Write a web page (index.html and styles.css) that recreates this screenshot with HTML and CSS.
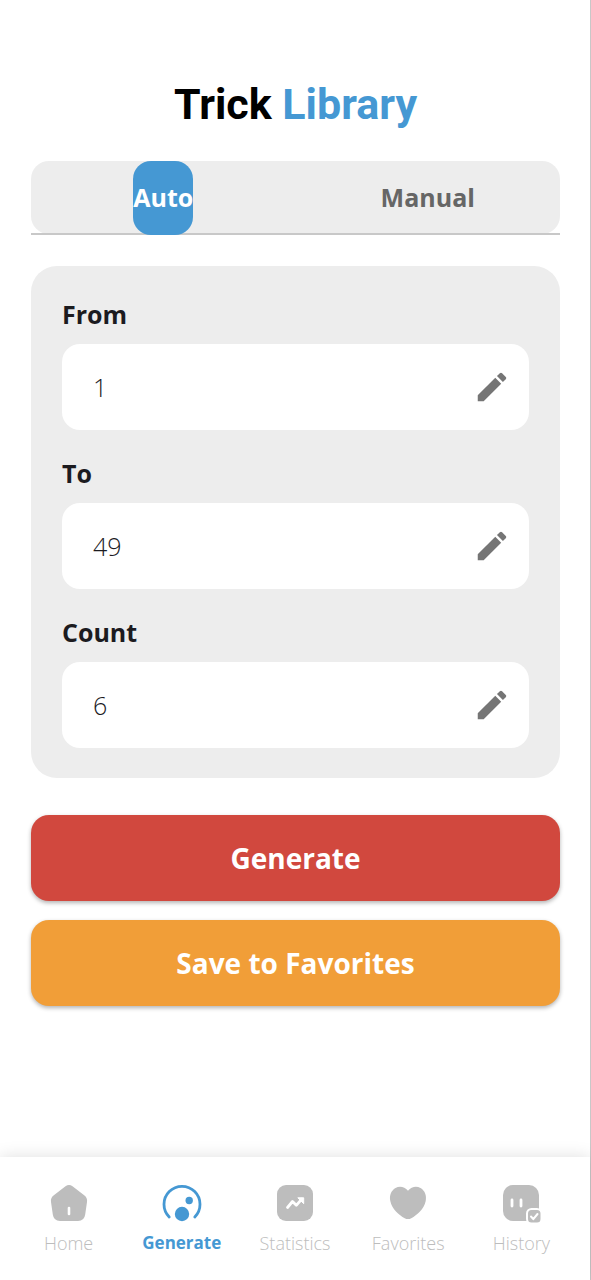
FILE: index.html
```html
<!DOCTYPE html>
<html lang="en">
<head>
<meta charset="utf-8">
<meta name="viewport" content="width=device-width, initial-scale=1">
<title>Trick Library</title>
<link rel="stylesheet" href="styles.css">
</head>
<body>
<div class="app">
  <main class="content">
    <h1 class="title">Trick <span class="title-accent">Library</span></h1>

    <div class="tabs" role="tablist">
      <div class="tab-cell"><button class="tab tab-active" type="button" role="tab" aria-selected="true">Auto</button></div>
      <div class="tab-cell"><button class="tab" type="button" role="tab" aria-selected="false">Manual</button></div>
    </div>

    <form class="form" id="range-form">
      <label class="label" for="from">From</label>
      <div class="field">
        <input class="input" id="from" type="text" inputmode="numeric" value="1">
        <svg class="pencil" viewBox="0 0 24 24" aria-hidden="true"><path d="M3 17.25V21h3.75L17.81 9.94l-3.75-3.75L3 17.25zM20.71 7.04a1 1 0 0 0 0-1.41l-2.34-2.34a1 1 0 0 0-1.41 0l-1.83 1.83 3.75 3.75 1.83-1.83z"/></svg>
      </div>
      <label class="label" for="to">To</label>
      <div class="field">
        <input class="input" id="to" type="text" inputmode="numeric" value="49">
        <svg class="pencil" viewBox="0 0 24 24" aria-hidden="true"><path d="M3 17.25V21h3.75L17.81 9.94l-3.75-3.75L3 17.25zM20.71 7.04a1 1 0 0 0 0-1.41l-2.34-2.34a1 1 0 0 0-1.41 0l-1.83 1.83 3.75 3.75 1.83-1.83z"/></svg>
      </div>
      <label class="label" for="count">Count</label>
      <div class="field">
        <input class="input" id="count" type="text" inputmode="numeric" value="6">
        <svg class="pencil" viewBox="0 0 24 24" aria-hidden="true"><path d="M3 17.25V21h3.75L17.81 9.94l-3.75-3.75L3 17.25zM20.71 7.04a1 1 0 0 0 0-1.41l-2.34-2.34a1 1 0 0 0-1.41 0l-1.83 1.83 3.75 3.75 1.83-1.83z"/></svg>
      </div>
    </form>

    <div class="actions">
      <button class="action action-generate" type="submit" form="range-form">Generate</button>
      <button class="action action-save" type="button">Save to Favorites</button>
    </div>
  </main>

  <nav class="nav">
    <a class="nav-item" href="#home">
      <svg class="nav-icon" viewBox="0 0 40 40" aria-hidden="true">
        <path fill="currentColor" d="M16.500 3.300Q20 .8 23.500 3.300L35.500 12.500Q38.600 15 38 19L36.200 31.500Q35.300 38 29 38H11Q4.700 38 3.800 31.500L2 19Q1.400 15 4.500 12.500Z"/>
        <path stroke="#fff" stroke-width="2.600" stroke-linecap="round" d="M20 25v6"/>
      </svg>
      <span>Home</span>
    </a>
    <a class="nav-item nav-item-active" href="#generate" aria-current="page">
      <svg class="nav-icon" viewBox="0 0 40 40" aria-hidden="true">
        <path fill="none" stroke="currentColor" stroke-width="2.800" stroke-linecap="round" d="M7.200 34A18 18 0 1 1 32.800 34"/>
        <circle cx="27.200" cy="17.500" r="3.700" fill="currentColor"/>
        <circle cx="20" cy="31" r="7.200" fill="currentColor"/>
      </svg>
      <span>Generate</span>
    </a>
    <a class="nav-item" href="#statistics">
      <svg class="nav-icon" viewBox="0 0 40 40" aria-hidden="true">
        <rect x="2" y="2" width="36" height="36" rx="9" fill="currentColor"/>
        <path fill="none" stroke="#fff" stroke-width="2.800" stroke-linecap="round" stroke-linejoin="round" d="M12.500 24.500l5-6 3.800 3.800 5.200-6"/>
        <path fill="#fff" stroke="#fff" stroke-linejoin="round" d="M22.800 14.800H28.700V20.700z"/>
      </svg>
      <span>Statistics</span>
    </a>
    <a class="nav-item" href="#favorites">
      <svg class="nav-icon" viewBox="0 0 40 40" aria-hidden="true">
        <path fill="currentColor" d="M20 7.800C16.500 3.500 11.500 2.600 7.500 5C3 7.700 1.200 12.500 2.300 18C4 26.500 11 32 16.700 35.200Q20 37 23.300 35.200C29 32 36 26.500 37.700 18C38.800 12.500 37 7.700 32.500 5C28.500 2.600 23.500 3.500 20 7.800Z"/>
      </svg>
      <span>Favorites</span>
    </a>
    <a class="nav-item" href="#history">
      <svg class="nav-icon" viewBox="0 0 40 40" aria-hidden="true">
        <rect x="2" y="2" width="36" height="36" rx="10" fill="currentColor"/>
        <path stroke="#fff" stroke-width="2.800" stroke-linecap="round" d="M11 17v6M20 17v6"/>
        <rect x="26" y="26" width="14.500" height="14.500" rx="4.500" fill="currentColor" stroke="#fff" stroke-width="2"/>
        <path fill="none" stroke="#fff" stroke-width="2" stroke-linecap="round" stroke-linejoin="round" d="M30 33.500l2.300 2.700 4.200-5.200"/>
      </svg>
      <span>History</span>
    </a>
  </nav>
</div>
</body>
</html>
```
FILE: styles.css
```css
*, *::before, *::after { box-sizing: border-box; }

body {
  margin: 0;
  background: #fff;
  color: #1c1b1f;
  font-family: "Open Sans", "Noto Sans", sans-serif;
}

.app {
  display: flex;
  flex-direction: column;
  min-height: 100vh;
  border-right: 1px solid #c8c8c8;
}

.content {
  flex: 1;
  padding: 78px 30px 32px 31px;
}

.title {
  margin: 0 0 31px;
  color: #000;
  font: 700 43px/52px Roboto, sans-serif;
  text-align: center;
}

.title-accent { color: #4598d3; }

.tabs {
  display: grid;
  grid-template-columns: 1fr 1fr;
  height: 74px;
  background: linear-gradient(#c8c8c8, #c8c8c8) bottom / 100% 2px no-repeat;
  position: relative;
}

.tabs::before {
  content: "";
  position: absolute;
  inset: 0 0 1px;
  z-index: -1;
  border-radius: 18px;
  background: #ededed;
}

.tab-cell {
  display: flex;
  justify-content: center;
}

.tab {
  padding: 0 0 2px;
  border: 0;
  border-radius: 18px;
  background: transparent;
  color: #666;
  font: 700 25px/34px "Open Sans", sans-serif;
}

.tab-active {
  background: #4598d3;
  color: #fff;
}

.form {
  display: flex;
  flex-direction: column;
  margin-top: 31px;
  padding: 31px 31px 30px;
  border-radius: 26px;
  background: #ededed;
}

.label {
  margin-bottom: 12px;
  font: 700 25px/35px "Open Sans", sans-serif;
}

.field {
  display: flex;
  align-items: center;
  height: 86px;
  padding: 0 18px 0 31px;
  border-radius: 18px;
  background: #fff;
}

.field + .label { margin-top: 26px; }

.input {
  flex: 1;
  min-width: 0;
  padding: 0;
  border: 0;
  outline: 0;
  background: transparent;
  color: #1c1b1f;
  font: 350 25px/36px "Open Sans", sans-serif;
}

.pencil {
  width: 38px;
  height: 38px;
  fill: #757575;
}

.actions {
  display: flex;
  flex-direction: column;
  gap: 19px;
  margin-top: 37px;
}

.action {
  height: 86px;
  border: 0;
  border-radius: 18px;
  color: #fff;
  font: 700 28px/38px "Open Sans", sans-serif;
  box-shadow: 0 2px 4px rgba(0, 0, 0, 0.3);
}

.action-generate { background: #d1483e; }
.action-save { background: #f19e38; }

.nav {
  display: grid;
  grid-template-columns: repeat(5, 1fr);
  padding: 26px 12px 24px;
  background: #fff;
  box-shadow: 0 0 16px rgba(0, 0, 0, 0.13);
}

.nav-item {
  display: flex;
  flex-direction: column;
  align-items: center;
  gap: 7px;
  color: #bdbdbd;
  font: 300 18px/26px "Open Sans", sans-serif;
  text-decoration: none;
}

.nav-item-active {
  color: #4598d3;
  font-size: 17px;
  font-weight: 700;
}

.nav-icon {
  width: 40px;
  height: 40px;
  overflow: visible;
}
```
